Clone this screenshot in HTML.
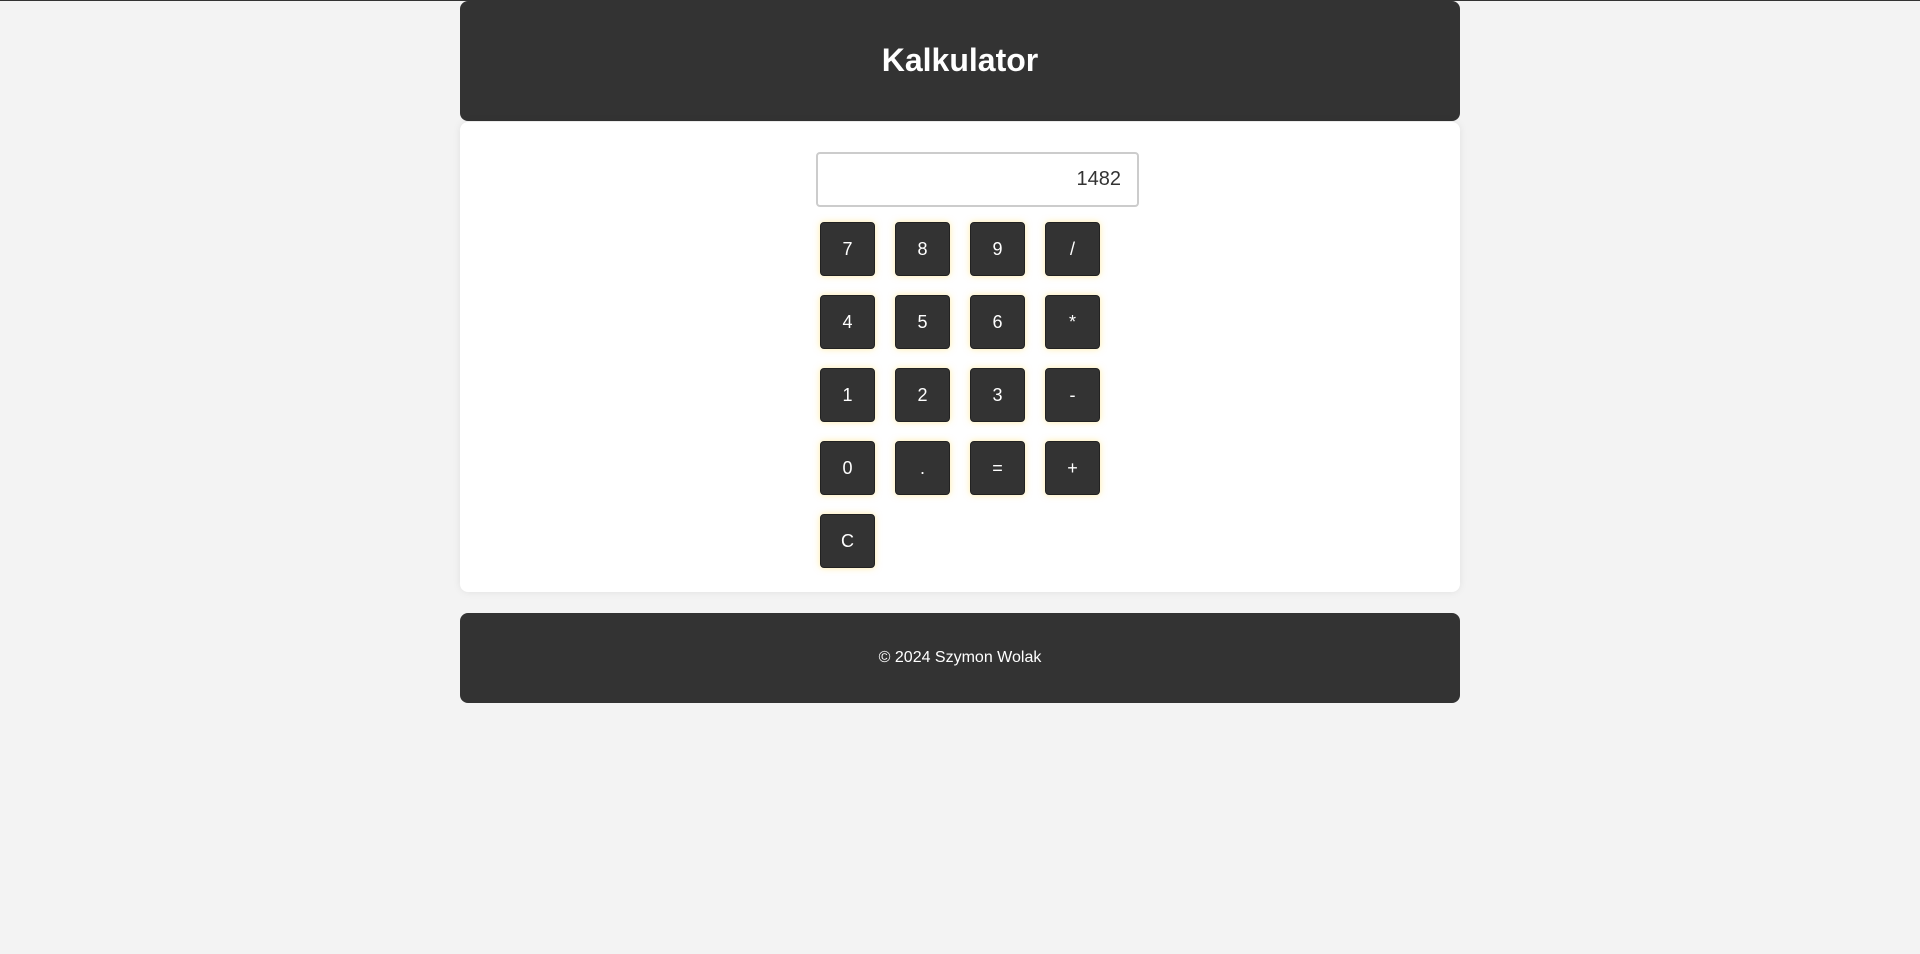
<!DOCTYPE html>
<html><head><style>
html,body{margin:0;padding:0;background:#f3f3f3;font-family:"Liberation Sans",Arial,sans-serif;}
body{width:1920px;height:954px;position:relative;overflow:hidden;border-top:1px solid #333;box-sizing:border-box;}
.hdr{position:absolute;left:460px;top:0px;width:1000px;height:120px;background:#333;border-radius:8px;color:#fff;font-weight:bold;font-size:32px;text-align:center;line-height:118px;}
.main{position:absolute;left:460px;top:121px;width:1000px;height:470px;background:#fff;border-radius:8px;box-shadow:0 0 8px rgba(0,0,0,.08);}
.disp{position:absolute;left:816px;top:151px;width:323px;height:55px;box-sizing:border-box;border:2px solid #ccc;border-radius:4px;background:#fff;text-align:right;font-size:20px;line-height:51px;padding-right:16px;color:#333;}
.b{position:absolute;width:55px;height:54px;background:#333;color:#fff;border-radius:4px;box-sizing:border-box;border:1px solid #222;box-shadow:0 0 7px rgba(255,220,80,.5);text-align:center;line-height:52px;font-size:18px;}
.ftr{position:absolute;left:460px;top:612px;width:1000px;height:90px;background:#333;border-radius:8px;color:#fff;font-size:16px;text-align:center;line-height:90px;}
</style></head><body>
<div class="hdr">Kalkulator</div>
<div class="main"></div>
<div class="disp">1482</div>
<div class="b" style="left:820px;top:221px">7</div>
<div class="b" style="left:895px;top:221px">8</div>
<div class="b" style="left:970px;top:221px">9</div>
<div class="b" style="left:1045px;top:221px">/</div>
<div class="b" style="left:820px;top:294px">4</div>
<div class="b" style="left:895px;top:294px">5</div>
<div class="b" style="left:970px;top:294px">6</div>
<div class="b" style="left:1045px;top:294px">*</div>
<div class="b" style="left:820px;top:367px">1</div>
<div class="b" style="left:895px;top:367px">2</div>
<div class="b" style="left:970px;top:367px">3</div>
<div class="b" style="left:1045px;top:367px">-</div>
<div class="b" style="left:820px;top:440px">0</div>
<div class="b" style="left:895px;top:440px">.</div>
<div class="b" style="left:970px;top:440px">=</div>
<div class="b" style="left:1045px;top:440px">+</div>
<div class="b" style="left:820px;top:513px">C</div>
<div class="ftr">© 2024 Szymon Wolak</div>
</body></html>
